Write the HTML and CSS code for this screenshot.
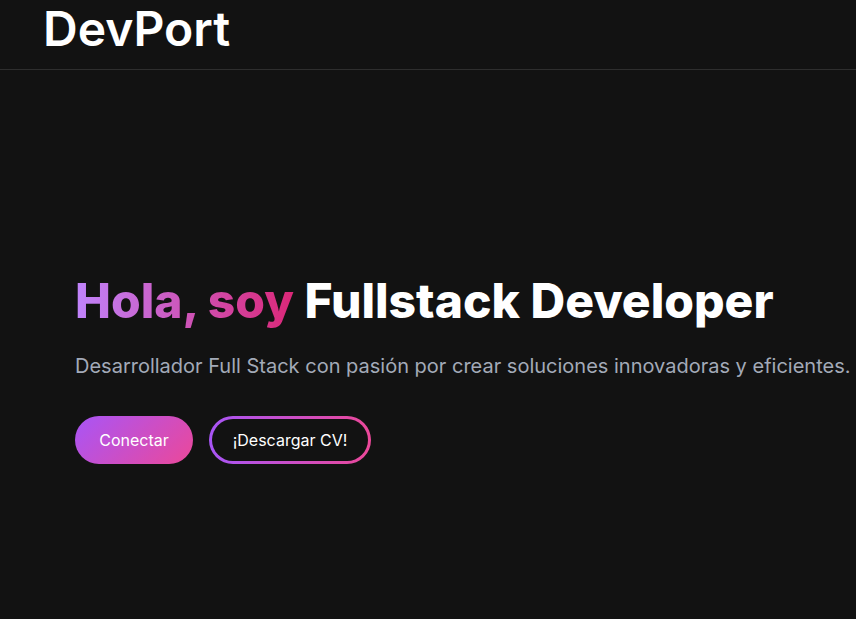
FILE: index.html
```html
<!DOCTYPE html>
<html lang="es">
<head>
<meta charset="utf-8">
<title>DevPort</title>
<link rel="stylesheet" href="styles.css">
</head>
<body>
<header class="site-header">
  <a class="logo" href="#">DevPort</a>
</header>
<main class="hero">
  <h1 class="hero-title"><span class="grad">Hola, soy</span> Fullstack Developer</h1>
  <p class="hero-text">Desarrollador Full Stack con pasión por crear soluciones innovadoras y eficientes.</p>
  <div class="actions">
    <a class="btn btn-primary" href="#">Conectar</a>
    <a class="btn btn-outline" href="#"><span class="btn-inner">¡Descargar CV!</span></a>
  </div>
</main>
</body>
</html>
```
FILE: styles.css
```css
* { box-sizing: border-box; }
html, body {
  margin: 0;
  padding: 0;
  background: #121212;
  font-family: Inter, "Noto Sans", sans-serif;
  color: #ffffff;
  overflow: hidden;
}
.site-header {
  height: 70px;
  border-bottom: 1px solid #2e2e2e;
  padding: 5px 43px 0;
}
.logo {
  display: block;
  font-size: 48px;
  line-height: 48px;
  font-weight: 600;
  color: #ffffff;
  text-decoration: none;
}
.hero {
  padding: 207px 0 0 75px;
}
.hero-title {
  margin: 0 0 27px;
  font-size: 48px;
  line-height: 48px;
  font-weight: 800;
  white-space: nowrap;
}
.grad {
  background: linear-gradient(90deg, #c084fc, #db2777);
  -webkit-background-clip: text;
  background-clip: text;
  color: transparent;
}
.hero-text {
  margin: 0 0 36px;
  font-size: 20px;
  line-height: 28px;
  color: #a3aab8;
  white-space: nowrap;
}
.actions {
  display: flex;
  gap: 16px;
}
.btn {
  display: inline-flex;
  align-items: center;
  justify-content: center;
  height: 48px;
  border-radius: 999px;
  font-size: 16px;
  color: #ffffff;
  text-decoration: none;
}
.btn-primary {
  width: 118px;
  background: linear-gradient(135deg, #a855f7, #ec4899);
}
.btn-outline {
  width: 162px;
  padding: 3px;
  background: linear-gradient(90deg, #a855f7, #ec4899);
}
.btn-inner {
  display: flex;
  align-items: center;
  justify-content: center;
  width: 100%;
  height: 100%;
  border-radius: 999px;
  background: #121212;
}
```
